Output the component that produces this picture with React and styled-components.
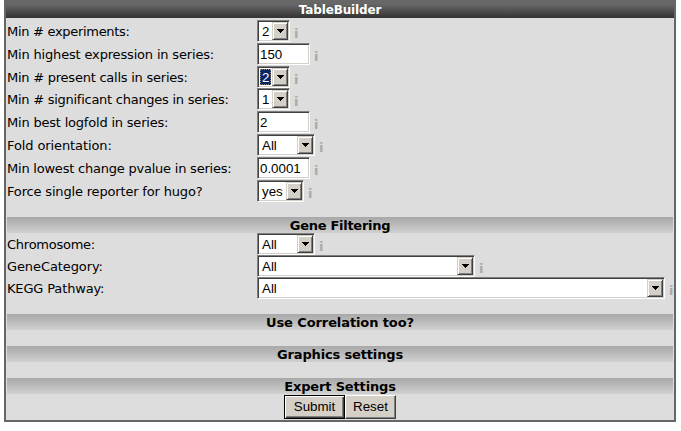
import React from "react";
import styled, { createGlobalStyle, css } from "styled-components";

const GlobalStyle = createGlobalStyle`
  body { margin: 0; background: #fff; }
  * { box-sizing: border-box; }
`;

const uiFont = css`font-family: Verdana, "DejaVu Sans", sans-serif;`;
const controlFont = css`font: 13.33px/18px Arial, "Liberation Sans", sans-serif;`;
const sunken = css`
  border: 1px solid;
  border-color: #808080 #fff #fff #808080;
  box-shadow: inset 1px 1px #404040, inset -1px -1px #d4d0c8;
`;

const Panel = styled.form`
  ${uiFont}
  width: 672px;
  height: 422px;
  margin: 0 0 0 4px;
  border: 2px solid #666;
  border-top: 0;
  background: #ddd;
  color: #000;
  font-size: 13px;
`;

const Title = styled.h1`
  height: 18px;
  margin: 0 0 2px;
  background: linear-gradient(#696969, #666 25%, #333);
  color: #fff;
  font-size: 12px;
  line-height: 21px;
  text-align: center;
  letter-spacing: -0.15px;
`;

const Section = styled.h2`
  height: 16px;
  margin: ${(p) => p.$top}px 1px 0;
  background: linear-gradient(#a8a8a8, #d0d0d0);
  font-size: 13px;
  line-height: 17px;
  text-align: center;
  letter-spacing: ${(p) => p.$track}px;
`;

const Row = styled.div`
  display: grid;
  grid-template-columns: 250px auto;
  height: ${(p) => p.$height}px;
  padding-left: 1px;
`;

const Label = styled.label`
  line-height: 23px;
  letter-spacing: ${(p) => p.$track}px;
  white-space: nowrap;
`;

const Field = styled.div`
  display: flex;
  gap: 4px;
`;

const TextInput = styled.input`
  ${controlFont}
  ${sunken}
  width: 53px;
  height: 22px;
  padding: 1px 2px;
  border-radius: 0;
  outline: 0;
  background: #fff;
`;

const SelectBox = styled.div`
  ${controlFont}
  ${sunken}
  display: flex;
  justify-content: space-between;
  width: ${(p) => p.$width}px;
  height: 22px;
  padding: 1px;
  background: #fff;
`;

const Value = styled.span`
  height: 16px;
  margin: 1px 0 0 1px;
  padding: 0 2px;
  line-height: 17px;
  ${(p) => p.$focused && css`
    background: #0a246a;
    color: #fff;
    outline: 1px dotted #8a8a80;
    outline-offset: -1px;
  `}
`;

const Drop = styled.span`
  display: grid;
  place-items: center;
  width: 16px;
  height: 18px;
  background: #d4d0c8;
  border: 1px solid;
  border-color: #d4d0c8 #404040 #404040 #d4d0c8;
  box-shadow: inset 1px 1px #fff, inset -1px -1px #808080;
`;

const Info = styled.span`
  height: 22px;
  color: #aaa;
  font-weight: bold;
  line-height: 27px;
`;

const Actions = styled.div`
  display: flex;
  justify-content: center;
  margin-top: 1px;
`;

const Button = styled.button`
  ${controlFont}
  width: ${(p) => p.$width}px;
  height: 24px;
  padding: 0 0 1px;
  background: #d4d0c8;
  color: #000;
  border: 1px solid;
  border-color: #fff #404040 #404040 #fff;
  box-shadow: inset -1px -1px #808080;
  ${(p) => p.$primary && css`
    border-color: #000;
    box-shadow: inset 1px 1px #fff, inset -1px -1px #404040, inset -2px -2px #808080;
  `}
`;

function Select({ value, width, focused }) {
  return (
    <SelectBox $width={width} role="combobox" aria-expanded="false">
      <Value $focused={focused}>{value}</Value>
      <Drop>
        <svg width="7" height="4" viewBox="0 0 7 4" shapeRendering="crispEdges">
          <path d="M0 0h7v1H6v1H5v1H4v1H3V3H2V2H1V1H0z" />
        </svg>
      </Drop>
    </SelectBox>
  );
}

function Setting({ label, value, width, focused, height = 23, track = -0.2 }) {
  return (
    <Row $height={height}>
      <Label $track={track}>{label}</Label>
      <Field>
        {width
          ? <Select value={value} width={width} focused={focused} />
          : <TextInput defaultValue={value} aria-label={label} />}
        <Info>i</Info>
      </Field>
    </Row>
  );
}

const settings = [
  { label: "Min # experiments:", value: "2", width: 33, track: -0.3 },
  { label: "Min highest expression in series:", value: "150", track: -0.17 },
  { label: "Min # present calls in series:", value: "2", width: 33, focused: true, height: 22, track: -0.24 },
  { label: "Min # significant changes in series:", value: "1", width: 33, track: -0.26 },
  { label: "Min best logfold in series:", value: "2" },
  { label: "Fold orientation:", value: "All", width: 58, track: -0.1 },
  { label: "Min lowest change pvalue in series:", value: "0.0001", track: -0.22 },
  { label: "Force single reporter for hugo?", value: "yes", width: 47, track: -0.17 },
];

const filters = [
  { label: "Chromosome:", value: "All", width: 58, height: 22, track: -0.25 },
  { label: "GeneCategory:", value: "All", width: 218, height: 22, track: -0.1 },
  { label: "KEGG Pathway:", value: "All", width: 408, height: 22, track: -0.15 },
];

export default function App() {
  return (
    <>
      <GlobalStyle />
      <Panel onSubmit={(e) => e.preventDefault()}>
        <Title>TableBuilder</Title>
        {settings.map((s) => <Setting key={s.label} {...s} />)}
        <Section $top={14} $track={-0.28}>Gene Filtering</Section>
        {filters.map((s) => <Setting key={s.label} {...s} />)}
        <Section $top={15} $track={-0.1}>Use Correlation too?</Section>
        <Section $top={16} $track={-0.15}>Graphics settings</Section>
        <Section $top={16} $track={-0.15}>Expert Settings</Section>
        <Actions>
          <Button type="submit" $primary $width={61}>Submit</Button>
          <Button type="reset" $width={51}>Reset</Button>
        </Actions>
      </Panel>
    </>
  );
}
